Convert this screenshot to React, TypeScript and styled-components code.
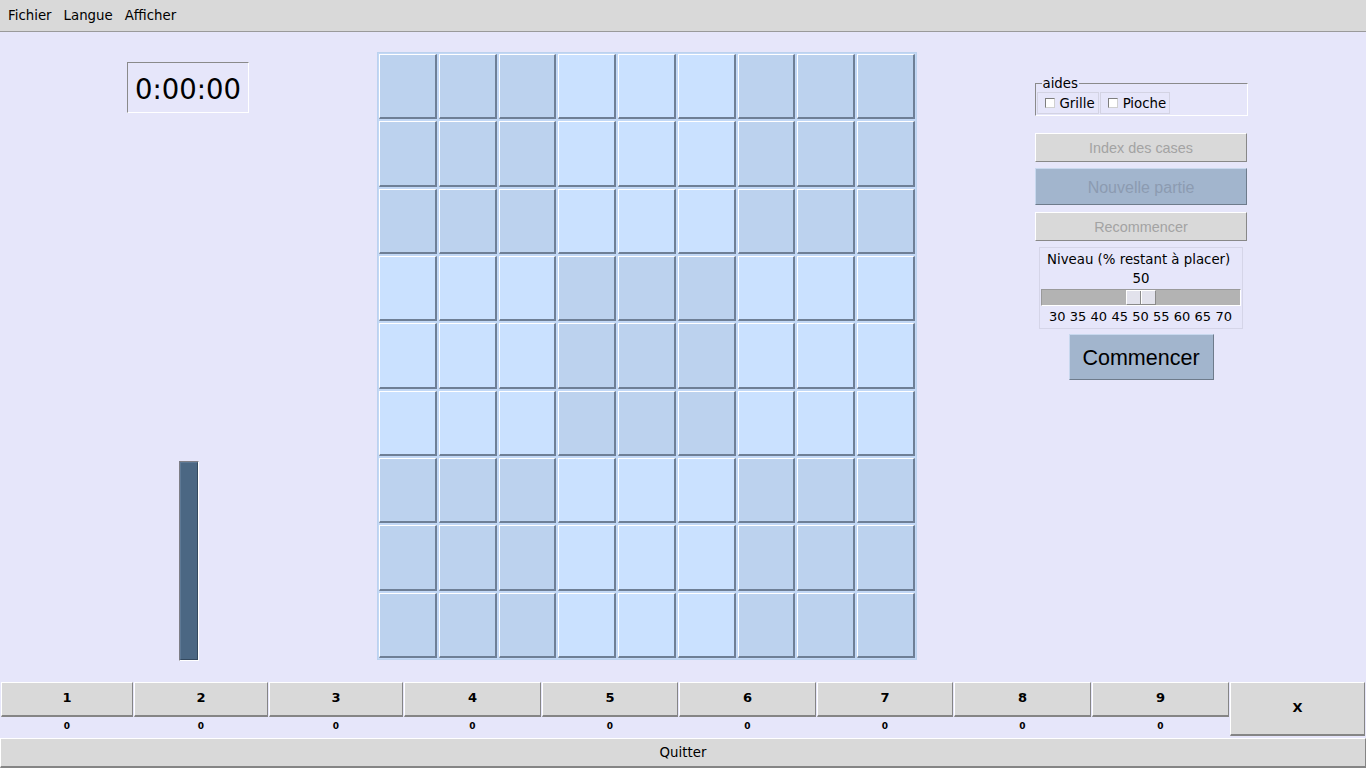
import React from "react";
import styled, { createGlobalStyle } from "styled-components";

const Global = createGlobalStyle`
  html, body { margin: 0; padding: 0; }
  body { background: #e6e6fa; font-family: "DejaVu Sans", sans-serif; }
  #root { width: 1366px; height: 768px; }
`;

const Root = styled.div`
  width: 1366px;
  height: 768px;
  display: flex;
  flex-direction: column;
  background: #e6e6fa;
  overflow: hidden;
`;

const MenuBar = styled.div`
  height: 31px;
  background: #d9d9d9;
  border-bottom: 1px solid #9a9a9a;
  display: flex;
  align-items: center;
  padding-left: 2px;
  font-size: 13.33px;
  color: #000;
`;

const MenuItem = styled.span`
  padding: 0 6px;
`;

const Main = styled.div`
  flex: 1;
  display: grid;
  grid-template-columns: 377px 540px 1fr;
  padding: 20px 0 21px;
  min-height: 0;
`;

const LeftCol = styled.div`
  display: flex;
  flex-direction: column;
  align-items: flex-start;
  justify-content: space-between;
  padding: 10px 0 0;
  margin-bottom: -1px;
`;

const TimerBox = styled.div`
  margin-left: 127px;
  width: 120px;
  height: 46px;
  padding-top: 3px;
  border: 1px solid;
  border-color: #8a8a8a #ffffff #ffffff #8a8a8a;
  display: flex;
  align-items: center;
  justify-content: center;
  font-family: "DejaVu Sans", sans-serif;
  font-size: 27.5px;
  color: #000;
`;

const ProgressOuter = styled.div`
  margin-left: 179px;
  width: 18px;
  height: 198px;
  border: 1px solid;
  border-color: #7e7e86 #ffffff #ffffff #7e7e86;
  display: flex;
  flex-direction: column;
  justify-content: flex-end;
`;

const ProgressFill = styled.div`
  background: #4b6783;
  border: 1px solid;
  border-color: #5d7894 #34495e #34495e #5d7894;
  box-sizing: border-box;
  width: 100%;
`;

const Board = styled.div`
  display: grid;
  grid-template-columns: repeat(9, 1fr);
  grid-template-rows: repeat(9, 1fr);
  gap: 2px;
  padding: 1px;
  border: 1px solid #bcd2ee;
  background: #c2d8f6;
  box-sizing: border-box;
  height: 608px;
`;

const Cell = styled.div<{ $dark: boolean }>`
  background: ${(p) => (p.$dark ? "#bcd2ee" : "#cae1ff")};
  border-style: solid;
  border-width: 1px 2px 2px 1px;
  border-color: #ffffff #6e7f96 #6e7f96 #ffffff;
`;

const RightCol = styled.div`
  display: flex;
  flex-direction: column;
  align-items: center;
  padding-top: 23px;
  padding-right: 1px;
`;

const Aides = styled.fieldset`
  margin: 0;
  width: 213px;
  box-sizing: border-box;
  padding: 0 1px 1px 1px;
  border: 1px solid;
  border-color: #8a8a8a #ffffff #ffffff #8a8a8a;
  display: flex;
  gap: 1px;
`;

const Legend = styled.legend`
  margin-left: 5px;
  padding: 0 1px;
  font-size: 13.33px;
  line-height: 17px;
  color: #000;
`;

const CheckFrame = styled.label`
  display: flex;
  align-items: center;
  gap: 5px;
  height: 20px;
  padding: 0 3px 0 7px;
  border: 1px solid #d3d3e3;
  font-size: 13.33px;
  color: #000;
`;

const Box = styled.span`
  width: 8px;
  height: 8px;
  background: #fff;
  border: 1px solid;
  border-color: #7e7e7e #d0d0d0 #d0d0d0 #7e7e7e;
`;

const GreyButton = styled.div<{ $mt: number }>`
  margin-top: ${(p) => p.$mt}px;
  width: 212px;
  height: 29px;
  box-sizing: border-box;
  background: #d9d9d9;
  border: 1px solid;
  border-color: #ffffff #888888 #888888 #ffffff;
  display: flex;
  align-items: center;
  justify-content: center;
  font-family: "Liberation Sans", Arial, sans-serif;
  font-size: 14.4px;
  color: #a3a3a3;
`;

const BlueButton = styled.div<{ $mt: number; $w: number; $h: number; $size: number; $color: string }>`
  margin-top: ${(p) => p.$mt}px;
  width: ${(p) => p.$w}px;
  height: ${(p) => p.$h}px;
  box-sizing: border-box;
  padding-top: 2px;
  background: #a2b5cd;
  border: 1px solid;
  border-color: #c8d8ee #6e7b8b #6e7b8b #c8d8ee;
  display: flex;
  align-items: center;
  justify-content: center;
  font-family: "Liberation Sans", Arial, sans-serif;
  font-size: ${(p) => p.$size}px;
  color: ${(p) => p.$color};
`;

const ScaleFrame = styled.div`
  margin-top: 6px;
  width: 204px;
  height: 82px;
  box-sizing: border-box;
  border: 1px solid #d5d5e8;
  display: flex;
  flex-direction: column;
  align-items: center;
  padding-top: 4px;
  font-size: 13.33px;
  color: #000;
`;

const ScaleLabel = styled.div`
  align-self: flex-start;
  padding-left: 7px;
  line-height: 16px;
  height: 16px;
  margin-bottom: 3px;
`;

const ScaleValue = styled.div`
  line-height: 16px;
  height: 16px;
  margin-bottom: 2px;
`;

const Trough = styled.div`
  position: relative;
  width: 200px;
  height: 17px;
  box-sizing: border-box;
  background: #b3b3b3;
  border: 1px solid;
  border-color: #9a9a9a #ffffff #ffffff #9a9a9a;
`;

const Thumb = styled.div`
  position: absolute;
  top: 0;
  width: 30px;
  height: 15px;
  box-sizing: border-box;
  background: #e2e2ec;
  border: 1px solid;
  border-color: #ffffff #8a8a8a #8a8a8a #ffffff;
  &::after {
    content: "";
    position: absolute;
    left: 13px;
    top: 0;
    bottom: 0;
    border-left: 1px solid #8a8a8a;
    border-right: 1px solid #ffffff;
  }
`;

const Ticks = styled.div`
  width: 200px;
  box-sizing: border-box;
  padding: 0 9px 0 8px;
  display: flex;
  justify-content: space-between;
  line-height: 16px;
  margin-top: 3px;
  font-size: 13px;
`;

const Bottom = styled.div`
  display: flex;
  flex-direction: column;
  padding-top: 1px;
`;

const NumGrid = styled.div`
  display: grid;
  grid-template-columns: 132px 134px 134px 137px 136px 137px 136px 137px 137px 1fr;
  grid-template-rows: 35px 20px;
  column-gap: 1px;
  padding: 0 1px;
`;

const RaisedButton = styled.div`
  box-sizing: border-box;
  background: #d9d9d9;
  border: 1px solid;
  border-color: #ffffff #858585 #858585 #ffffff;
  border-bottom-width: 2px;
  padding-bottom: 3px;
  display: flex;
  align-items: center;
  justify-content: center;
  font-family: "DejaVu Sans", sans-serif;
  font-size: 13px;
  font-weight: bold;
  color: #000;
`;

const XButton = styled(RaisedButton)`
  grid-column: 10;
  grid-row: 1 / span 2;
  margin-bottom: 1px;
`;

const Count = styled.div`
  display: flex;
  align-items: center;
  justify-content: center;
  font-size: 9px;
  font-weight: bold;
  padding-bottom: 2px;
`;

const Quit = styled(RaisedButton)`
  margin-top: 1px;
  height: 30px;
  padding-bottom: 0;
  font-weight: normal;
  font-size: 13.33px;
`;

const thumbLeft = (value: number) => ((value - 30) / 40) * (198 - 30);

export default function App() {
  const cells = [] as React.ReactNode[];
  for (let r = 0; r < 9; r++) {
    for (let c = 0; c < 9; c++) {
      const dark = (Math.floor(r / 3) + Math.floor(c / 3)) % 2 === 0;
      cells.push(<Cell key={`${r}-${c}`} $dark={dark} />);
    }
  }
  const nums = [1, 2, 3, 4, 5, 6, 7, 8, 9];
  return (
    <Root>
      <Global />
      <MenuBar>
        <MenuItem>Fichier</MenuItem>
        <MenuItem>Langue</MenuItem>
        <MenuItem>Afficher</MenuItem>
      </MenuBar>
      <Main>
        <LeftCol>
          <TimerBox>0:00:00</TimerBox>
          <ProgressOuter>
            <ProgressFill style={{ height: "100%" }} />
          </ProgressOuter>
        </LeftCol>
        <Board>{cells}</Board>
        <RightCol>
          <Aides>
            <Legend>aides</Legend>
            <CheckFrame>
              <Box />
              Grille
            </CheckFrame>
            <CheckFrame>
              <Box />
              Pioche
            </CheckFrame>
          </Aides>
          <GreyButton $mt={17}>Index des cases</GreyButton>
          <BlueButton $mt={6} $w={212} $h={37} $size={16} $color="#8c9bb1">
            Nouvelle partie
          </BlueButton>
          <GreyButton $mt={7}>Recommencer</GreyButton>
          <ScaleFrame>
            <ScaleLabel>Niveau (% restant à placer)</ScaleLabel>
            <ScaleValue>50</ScaleValue>
            <Trough>
              <Thumb style={{ left: thumbLeft(50) }} />
            </Trough>
            <Ticks>
              {[30, 35, 40, 45, 50, 55, 60, 65, 70].map((t) => (
                <span key={t}>{t}</span>
              ))}
            </Ticks>
          </ScaleFrame>
          <BlueButton $mt={5} $w={145} $h={46} $size={21.5} $color="#000">
            Commencer
          </BlueButton>
        </RightCol>
      </Main>
      <Bottom>
        <NumGrid>
          {nums.map((n) => (
            <RaisedButton key={`b${n}`} style={{ gridColumn: n, gridRow: 1 }}>
              {n}
            </RaisedButton>
          ))}
          {nums.map((n) => (
            <Count key={`c${n}`} style={{ gridColumn: n, gridRow: 2 }}>
              0
            </Count>
          ))}
          <XButton>X</XButton>
        </NumGrid>
        <Quit>Quitter</Quit>
      </Bottom>
    </Root>
  );
}
